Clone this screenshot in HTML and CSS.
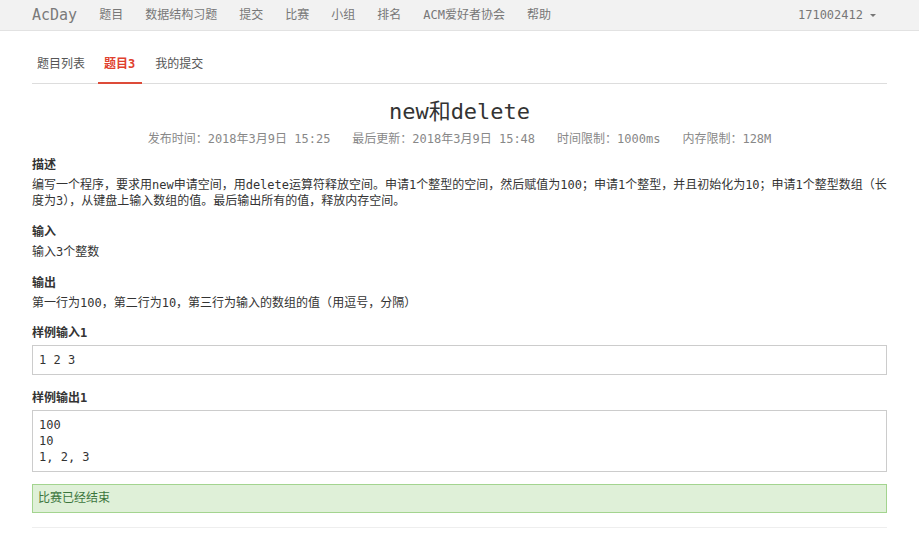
FILE: index.html
```html
<!DOCTYPE html>
<html lang="zh">
<head>
<meta charset="utf-8">
<title>new和delete</title>
<link rel="stylesheet" href="styles.css">
</head>
<body>
<header class="navbar">
  <div class="container nav-inner">
    <a class="brand">AcDay</a>
    <ul class="nav">
      <li>题目</li>
      <li>数据结构习题</li>
      <li>提交</li>
      <li>比赛</li>
      <li>小组</li>
      <li>排名</li>
      <li>ACM爱好者协会</li>
      <li>帮助</li>
    </ul>
    <div class="user">171002412 <span class="caret"></span></div>
  </div>
</header>
<main class="container">
  <ul class="tabs">
    <li class="tab">题目列表</li>
    <li class="tab active">题目3</li>
    <li class="tab">我的提交</li>
  </ul>
  <h1 class="title">new和delete</h1>
  <div class="meta">
    <span>发布时间：2018年3月9日 15:25</span>
    <span>最后更新：2018年3月9日 15:48</span>
    <span>时间限制：1000ms</span>
    <span>内存限制：128M</span>
  </div>
  <section class="sec sec-first">
    <h4>描述</h4>
    <p>编写一个程序，要求用new申请空间，用delete运算符释放空间。申请1个整型的空间，然后赋值为100；申请1个整型，并且初始化为10；申请1个整型数组（长度为3），从键盘上输入数组的值。最后输出所有的值，释放内存空间。</p>
  </section>
  <section class="sec">
    <h4>输入</h4>
    <p>输入3个整数</p>
  </section>
  <section class="sec">
    <h4>输出</h4>
    <p>第一行为100，第二行为10，第三行为输入的数组的值（用逗号，分隔）</p>
  </section>
  <section class="sec sec-in">
    <h4>样例输入1</h4>
    <pre class="sample">1 2 3</pre>
  </section>
  <section class="sec sec-out">
    <h4>样例输出1</h4>
    <pre class="sample">100
10
1, 2, 3</pre>
  </section>
  <div class="alert">比赛已经结束</div>
  <hr class="rule">
</main>
</body>
</html>
```
FILE: styles.css
```css
* { box-sizing: border-box; }
html, body { margin: 0; padding: 0; }
body {
  background: #fff;
  color: #333;
  font-family: "DejaVu Sans Mono", "Noto Sans CJK SC", monospace;
  font-size: 12px;
  line-height: 16px;
}
ul { list-style: none; margin: 0; padding: 0; }
.container { width: 855px; margin: 0 auto; }

.navbar {
  height: 31px;
  background: #f2f2f2;
  border-bottom: 1px solid #e2e2e2;
}
.nav-inner { display: flex; align-items: center; height: 30px; }
.brand {
  font-size: 15px;
  color: #7a7a7a;
  margin-right: 11px;
  line-height: 30px;
}
.nav { display: flex; }
.nav li { padding: 0 11px; color: #777; line-height: 30px; }
.user { margin-left: auto; padding: 0 11px; color: #777; line-height: 30px; display: flex; align-items: center; }
.caret {
  display: inline-block;
  width: 0; height: 0;
  margin-left: 7px;
  border-left: 3px solid transparent;
  border-right: 3px solid transparent;
  border-top: 3px solid #777;
}

.tabs {
  display: flex;
  margin-top: 17px;
  border-bottom: 1px solid #ddd;
}
.tab {
  padding: 8px 5px 10px;
  margin-right: 8px;
  margin-bottom: -1px;
  color: #555;
  border-bottom: 2px solid transparent;
}
.tab.active { color: #e0412f; font-weight: bold; border-bottom-color: #dd4b39; padding: 8px 7px 10px 6px; }

.title {
  margin: 15px 0 0;
  text-align: center;
  font-size: 22px;
  line-height: 26px;
  font-weight: normal;
  color: #333;
}
.meta {
  margin-top: 6px;
  display: flex;
  justify-content: center;
  gap: 22px;
  color: #888;
}

.sec { margin-top: 14px; }
.sec-first { margin-top: 9px; }
.sec-in { margin-top: 13px; }
.sec-out { margin-top: 14px; }
.sec h4 { margin: 0 0 3px; font-size: 12px; line-height: 18px; font-weight: bold; }
.sec p { margin: 0; }
.sample {
  margin: 0;
  border: 1px solid #ccc;
  padding: 6px;
  font-family: "DejaVu Sans Mono", monospace;
  font-size: 12px;
  line-height: 16px;
  color: #333;
  background: #fff;
}

.alert {
  margin-top: 12px;
  background: #dff0d8;
  border: 1px solid #a3d48f;
  color: #3c763d;
  padding: 5px 5px 6px;
  line-height: 16px;
}
.rule { margin: 14px 0 0; border: 0; border-top: 1px solid #eee; }
```
